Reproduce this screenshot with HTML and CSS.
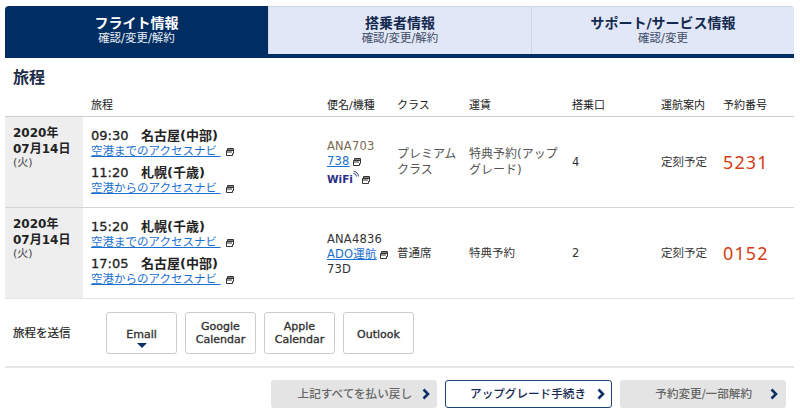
FILE: index.html
```html
<!DOCTYPE html>
<html lang="ja">
<head>
<meta charset="utf-8">
<title>旅程</title>
<link rel="stylesheet" href="styles.css">
</head>
<body>
<svg class="defs" width="0" height="0" aria-hidden="true">
  <symbol id="win" viewBox="0 0 8 8">
    <path d="M1.5 0.5H7.5V5.5H6.5V7.5H0.5V2.5H1.5Z" fill="#fff" stroke="#333" stroke-width="1"/>
    <path d="M1 2.2H7" stroke="#333" stroke-width="1.6"/>
    <path d="M1 4H6" stroke="#333" stroke-width="1"/>
  </symbol>
</svg>
<main class="page">
  <nav class="tabs">
    <a class="tab tab-active"><strong>フライト情報</strong><span>確認/変更/解約</span></a>
    <a class="tab"><strong>搭乗者情報</strong><span>確認/変更/解約</span></a>
    <a class="tab"><strong>サポート/サービス情報</strong><span>確認/変更</span></a>
  </nav>
  <h1 class="title">旅程</h1>
  <table class="trips">
    <colgroup>
      <col class="c-date"><col class="c-route"><col class="c-flight"><col class="c-class"><col class="c-fare"><col class="c-gate"><col class="c-status"><col class="c-num">
    </colgroup>
    <thead>
      <tr><th></th><th class="th-route">旅程</th><th>便名/機種</th><th>クラス</th><th>運賃</th><th>搭乗口</th><th>運航案内</th><th>予約番号</th></tr>
    </thead>
    <tbody>
      <tr>
        <td class="date"><b>2020年<br>07月14日</b><span class="dow">(火)</span></td>
        <td class="route">
          <div class="leg"><div class="time"><span class="clock">09:30</span>名古屋(中部)</div><a class="nav">空港までのアクセスナビ </a><svg class="win"><use href="#win"/></svg></div>
          <div class="leg"><div class="time"><span class="clock">11:20</span>札幌(千歳)</div><a class="nav">空港からのアクセスナビ </a><svg class="win"><use href="#win"/></svg></div>
        </td>
        <td class="flight">
          <div class="ana-brown">ANA703</div>
          <div><a class="nav">738</a><svg class="win win-s"><use href="#win"/></svg></div>
          <div class="wifi-line"><span class="wifi">WiFi</span><svg class="wave" viewBox="0 0 6 6"><path d="M0.5 2.5A3 3 0 0 1 3.5 5.5M0.5 0.5A5 5 0 0 1 5.5 5.5" fill="none" stroke="#2b2f86" stroke-width="0.9"/></svg><svg class="win win-w"><use href="#win"/></svg></div>
        </td>
        <td class="plain">プレミアム<br>クラス</td>
        <td class="plain">特典予約(アップ<br>グレード)</td>
        <td class="small">4</td>
        <td class="small">定刻予定</td>
        <td class="num">5231</td>
      </tr>
      <tr>
        <td class="date"><b>2020年<br>07月14日</b><span class="dow">(火)</span></td>
        <td class="route">
          <div class="leg"><div class="time"><span class="clock">15:20</span>札幌(千歳)</div><a class="nav">空港までのアクセスナビ </a><svg class="win"><use href="#win"/></svg></div>
          <div class="leg"><div class="time"><span class="clock">17:05</span>名古屋(中部)</div><a class="nav">空港からのアクセスナビ </a><svg class="win"><use href="#win"/></svg></div>
        </td>
        <td class="flight">
          <div>ANA4836</div>
          <div><a class="nav">ADO運航</a><svg class="win win-s"><use href="#win"/></svg></div>
          <div>73D</div>
        </td>
        <td class="small">普通席</td>
        <td class="small">特典予約</td>
        <td class="small">2</td>
        <td class="small">定刻予定</td>
        <td class="num">0152</td>
      </tr>
    </tbody>
  </table>
  <section class="send">
    <div class="send-label">旅程を送信</div>
    <button class="send-btn send-email">Email<i class="caret"></i></button>
    <button class="send-btn">Google<br>Calendar</button>
    <button class="send-btn">Apple<br>Calendar</button>
    <button class="send-btn send-one">Outlook</button>
  </section>
  <section class="actions">
    <button class="act act-first">上記すべてを払い戻し<svg class="chev" viewBox="0 0 8 12"><path d="M1.5 1.5L6 6L1.5 10.5" fill="none" stroke="#0b3166" stroke-width="2.6"/></svg></button>
    <button class="act act-on">アップグレード手続き<svg class="chev" viewBox="0 0 8 12"><path d="M1.5 1.5L6 6L1.5 10.5" fill="none" stroke="#0b3166" stroke-width="2.6"/></svg></button>
    <button class="act act-last">予約変更/一部解約<svg class="chev" viewBox="0 0 8 12"><path d="M1.5 1.5L6 6L1.5 10.5" fill="none" stroke="#0b3166" stroke-width="2.6"/></svg></button>
  </section>
</main>
</body>
</html>
```
FILE: styles.css
```css
* { box-sizing: border-box; }
html, body { margin: 0; padding: 0; background: #fff; }
body {
  font-family: "DejaVu Sans", "Noto Sans CJK JP", sans-serif;
  color: #333;
  font-size: 11px;
  width: 800px;
  height: 418px;
  overflow: hidden;
}
.defs { position: absolute; }
.page { width: 789px; margin-left: 5px; padding-top: 6px; }

.tabs { display: flex; height: 52px; border-bottom: 4px solid #002d62; }
.tab {
  width: 263px;
  display: flex;
  flex-direction: column;
  align-items: center;
  padding-top: 7px;
  background: #e1e7f6;
  border-top: 1px solid #ccd5ea;
  border-left: 1px solid #cdd5e8;
  color: #1d3159;
}
.tab:last-child { border-radius: 0 4px 0 0; }
.tab strong { font-size: 14px; line-height: 18px; font-weight: 700; color: #14294f; }
.tab span { font-size: 11.5px; line-height: 13px; color: #3f4d68; }
.tab-active { background: #002d62; border: 0; border-radius: 4px 0 0 0; padding-top: 8px; margin-bottom: -4px; }
.tab-active strong { color: #fff; }
.tab-active span { color: #e8edf6; }

.title { margin: 0; padding: 8px 0 0 8px; height: 38px; font-size: 16px; line-height: 24px; font-weight: 700; color: #1d2c47; }

.trips { width: 789px; border-collapse: collapse; table-layout: fixed; }
.c-date { width: 78px; }
.c-route { width: 244px; }
.c-flight { width: 70px; }
.c-class { width: 72px; }
.c-fare { width: 103px; }
.c-gate { width: 89px; }
.c-status { width: 62px; }
.c-num { width: 71px; }
.trips th { height: 20px; padding: 0 0 4px; text-align: left; font-size: 11px; font-weight: 400; color: #222; vertical-align: middle; border-bottom: 1px solid #ccc; }
.th-route { padding-left: 8px !important; }
.trips td { padding: 0; height: 91px; vertical-align: middle; border-bottom: 1px solid #d4d4d4; font-size: 11px; line-height: 15px; }
.trips tbody tr:last-child td { border-bottom: 1px solid #e4e4e4; }
.trips td.date { background: #eee; padding: 8px 0 0 8px; vertical-align: top; font-size: 12px; line-height: 16px; color: #222; }
.dow { display: block; margin-top: -1px; font-size: 11px; line-height: 14px; color: #444; }
.trips td.route { padding: 5px 0 0 8px; vertical-align: middle; }
.leg { height: 37px; }
.time { font-size: 13px; line-height: 16px; font-weight: 700; color: #222; }
.clock { display: inline-block; width: 50px; font-weight: 400; -webkit-text-stroke: 0.3px #222; }
.nav { color: #1a6fd0; text-decoration: underline; font-size: 11.5px; line-height: 15px; }
.win { width: 8px; height: 8px; margin-left: 5px; vertical-align: -1px; }
.win-s { margin-left: 3px; }
.win-w { margin-left: 3px; }
.trips td.flight { padding-top: 2px; font-size: 11.5px; line-height: 15px; letter-spacing: 0.2px; color: #333; }
.ana-brown { color: #7a6a50; }
.wifi-line { margin-top: 2px; line-height: 16px; white-space: nowrap; }
.wifi { font-weight: 700; font-size: 10.5px; color: #2b2f86; letter-spacing: 0; }
.wave { width: 6px; height: 6px; vertical-align: 6px; }
.trips td.plain { font-size: 12px; line-height: 16px; color: #555; }
.trips td.small { font-size: 11.5px; color: #333; }
.trips td.num { font-family: "Noto Sans", sans-serif; font-size: 18px; letter-spacing: 1.1px; color: #d63c12; }

.send { display: flex; align-items: flex-start; height: 69px; padding: 13px 0 0 8px; border-bottom: 2px solid #e6e6e6; }
.send-label { width: 93px; line-height: 42px; font-size: 11.5px; color: #222; -webkit-text-stroke: 0.2px #222; }
.send-btn {
  position: relative;
  width: 71px;
  height: 42px;
  margin-right: 8px;
  padding: 0;
  border: 1px solid #ccc;
  border-radius: 3px;
  background: #fff;
  font: 400 11px/13px "DejaVu Sans", sans-serif;
  -webkit-text-stroke: 0.35px #333;
  color: #333;
}
.send-email, .send-one { padding-top: 2px; }
.caret {
  position: absolute;
  left: 30px;
  top: 30px;
  border-style: solid;
  border-width: 5px 5px 0;
  border-color: #0b3166 transparent transparent;
}
.actions { display: flex; justify-content: flex-end; gap: 8px; padding: 12px 8px 0 0; }
.act {
  position: relative;
  height: 28px;
  width: 166px;
  padding: 0 25px 0 0;
  border: 0;
  border-radius: 3px;
  background: #e4e4e4;
  color: #666;
  font: 500 11.6px/28px "DejaVu Sans", "Noto Sans CJK JP", sans-serif;
  text-align: right;
}
.act-on { width: 167px; background: #fff; border: 1px solid #1a4478; color: #14294f; line-height: 26px; }
.act-last { padding-right: 34px; }
.chev { position: absolute; right: 7px; top: 8px; width: 8px; height: 12px; }
.act-on .chev { right: 6px; top: 7px; }
.act-last .chev { right: 8px; }
```
